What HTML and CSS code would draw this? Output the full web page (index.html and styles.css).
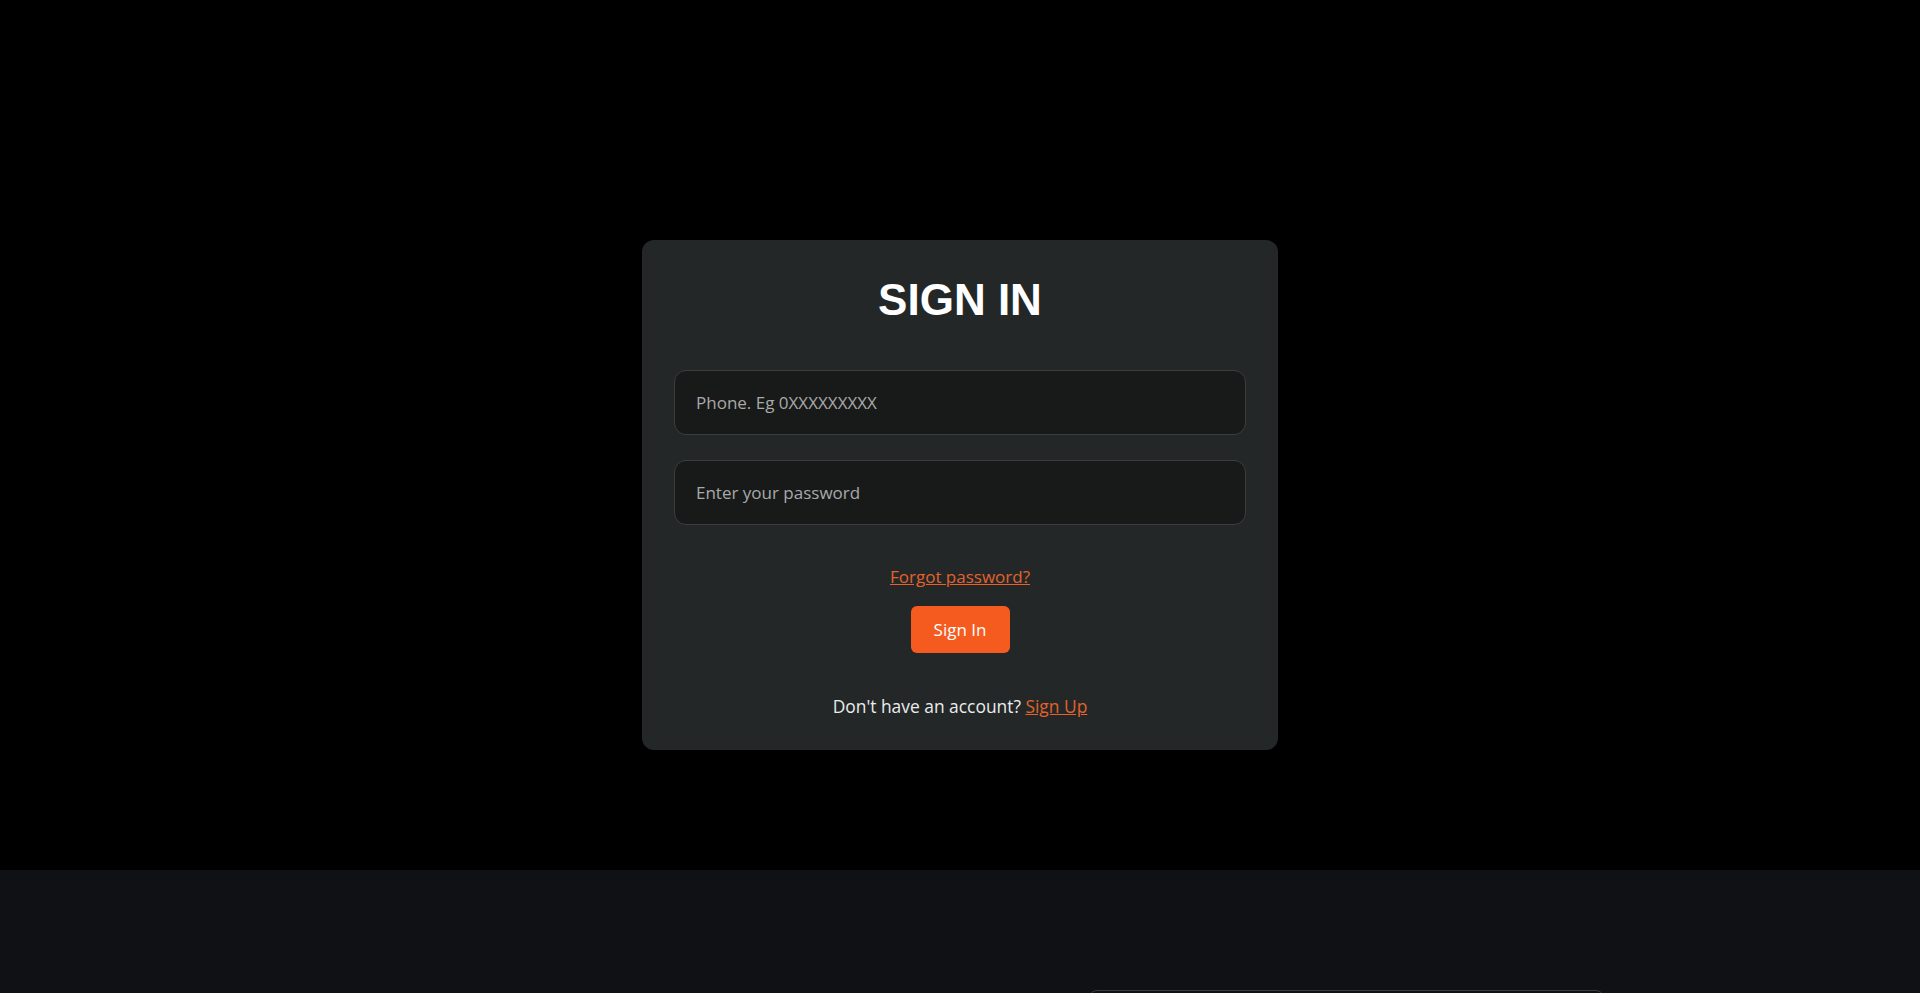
FILE: index.html
```html
<!DOCTYPE html>
<html lang="en">
<head>
<meta charset="utf-8">
<title>Sign In</title>
<link rel="stylesheet" href="styles.css">
</head>
<body>
<main class="auth">
  <form class="card">
    <h1 class="card-title">SIGN IN</h1>
    <div class="field">
      <input class="input" type="tel" placeholder="Phone. Eg 0XXXXXXXXX">
    </div>
    <div class="field">
      <input class="input" type="password" placeholder="Enter your password">
    </div>
    <a class="forgot" href="#">Forgot password?</a>
    <button class="btn-primary" type="button">Sign In</button>
    <p class="switch">Don't have an account? <a class="link" href="#">Sign Up</a></p>
  </form>
</main>
<footer class="footer">
  <div class="footer-grid">
    <div class="footer-spacer"></div>
    <div class="footer-box"></div>
  </div>
</footer>
</body>
</html>
```
FILE: styles.css
```css
* { box-sizing: border-box; }
html, body { margin: 0; padding: 0; }
body {
  background: #000;
  font-family: "Open Sans", "Liberation Sans", sans-serif;
  color: #ececec;
  height: 993px;
  overflow: hidden;
}
.auth {
  height: 870px;
  display: flex;
  justify-content: center;
  align-items: flex-start;
  padding-top: 240px;
}
.card {
  width: 636px;
  background: #232728;
  border-radius: 12px;
  padding: 34px 32px 32px;
  display: flex;
  flex-direction: column;
  align-items: center;
}
.card-title {
  margin: 0 0 44px;
  font-family: "Liberation Sans", Arial, sans-serif;
  font-weight: 700;
  font-size: 44px;
  line-height: 52px;
  color: #fff;
  letter-spacing: 0;
}
.field { width: 100%; margin-bottom: 25px; }
.field:last-of-type { margin-bottom: 0; }
.input {
  display: block;
  width: 100%;
  height: 65px;
  background: #181a1a;
  border: 1px solid #3b3e40;
  border-radius: 12px;
  padding: 0 21px;
  font-family: inherit;
  font-size: 17px;
  color: #e0e0e0;
  outline: none;
}
.input::placeholder { color: #a9a9a9; }
.forgot {
  margin-top: 40px;
  font-size: 17px;
  line-height: 24px;
  color: #e4622b;
  text-decoration: underline;
}
.btn-primary {
  margin-top: 17px;
  width: 99px;
  height: 47px;
  background: #f55b1f;
  border: none;
  border-radius: 6px;
  color: #fff;
  font-family: inherit;
  font-size: 17px;
  cursor: pointer;
}
.switch {
  margin: 41px 0 0;
  font-size: 17.4px;
  line-height: 24px;
  color: #ececec;
}
.link { color: #e4622b; text-decoration: underline; }
.footer {
  height: 123px;
  background: #0f1115;
  padding-top: 120px;
  overflow: hidden;
}
.footer-grid {
  display: grid;
  grid-template-columns: 1089px 515px;
}
.footer-box {
  height: 40px;
  border: 1px solid #3a3c40;
  border-radius: 8px;
}
```
